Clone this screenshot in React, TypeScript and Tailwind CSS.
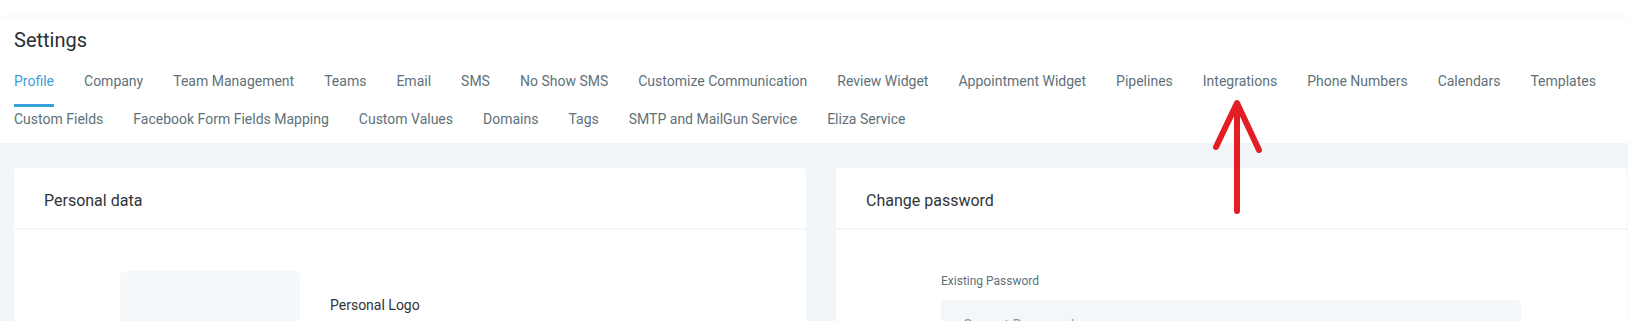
const tabs = [
  "Profile",
  "Company",
  "Team Management",
  "Teams",
  "Email",
  "SMS",
  "No Show SMS",
  "Customize Communication",
  "Review Widget",
  "Appointment Widget",
  "Pipelines",
  "Integrations",
  "Phone Numbers",
  "Calendars",
  "Templates",
  "Custom Fields",
  "Facebook Form Fields Mapping",
  "Custom Values",
  "Domains",
  "Tags",
  "SMTP and MailGun Service",
  "Eliza Service",
];

const CardHeader = ({ title }: { title: string }) => (
  <div className="px-[30px] pt-[21px] pb-[15px] border-b-2 border-[#f2f6f9]">
    <h3 className="text-[16px] leading-[24px] text-[#2f3438]">{title}</h3>
  </div>
);

const Arrow = () => (
  <svg
    className="absolute left-[1205px] top-[95px] pointer-events-none"
    width="64"
    height="124"
    viewBox="0 0 64 124"
    fill="none"
  >
    <path
      d="M32 10 L32 116 M11 52 L32 8 L54 55"
      stroke="#e41e25"
      strokeWidth="6"
      strokeLinecap="round"
      strokeLinejoin="round"
    />
  </svg>
);

export default function App() {
  return (
    <div
      className="relative w-full h-[321px] overflow-hidden bg-white"
      style={{ fontFamily: "Roboto, 'Liberation Sans', sans-serif" }}
    >
      <div className="relative z-10 h-[15px] bg-white shadow-[0_3px_8px_rgba(0,0,0,0.03)]" />

      <div className="px-[14px] pt-[13px]">
        <h1 className="text-[20px] leading-[24px] text-[#2a2f33] mb-[19px]">Settings</h1>
        <nav className="flex flex-wrap gap-x-[30px] gap-y-[2px] -mb-[2px]">
          {tabs.map((tab, i) => (
            <a
              key={tab}
              href="#"
              className={
                i === 0
                  ? "text-[14px] leading-[20px] pb-[13px] border-b-[3px] border-[#37a1de] text-[#3f9ddb]"
                  : "text-[14px] leading-[20px] pb-[13px] border-b-[3px] border-transparent text-[#607179]"
              }
            >
              {tab}
            </a>
          ))}
        </nav>
      </div>

      <div className="relative bg-[#f2f6f9] pl-[14px] pt-[25px] pb-[40px] flex gap-[30px]">
        <div className="w-[792px] shrink-0 bg-white rounded-[4px]">
          <CardHeader title="Personal data" />
          <div className="pt-[41px] pl-[106px] flex gap-[30px] min-h-[200px]">
            <div className="w-[180px] h-[180px] rounded-[5px] bg-[#f5f9fc]" />
            <span className="mt-[24px] text-[14px] leading-[20px] text-[#2f3438]">Personal Logo</span>
          </div>
        </div>

        <div className="w-[791px] shrink-0 bg-white rounded-[4px]">
          <CardHeader title="Change password" />
          <div className="pt-[43px] pl-[105px] min-h-[200px]">
            <label className="block text-[12px] leading-[16px] text-[#607179] mb-[11px]">
              Existing Password
            </label>
            <input
              type="password"
              placeholder="Current Password"
              className="block w-[580px] h-[50px] rounded-[5px] bg-[#f3f7fa] px-[22px] text-[14px] text-[#2f3438] placeholder:text-[#8c9aa4] outline-none"
            />
          </div>
        </div>
      </div>

      <Arrow />
    </div>
  );
}
